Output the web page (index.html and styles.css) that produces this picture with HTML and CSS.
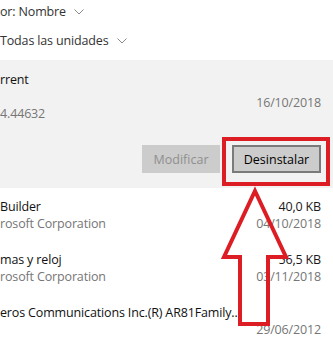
FILE: index.html
```html
<!DOCTYPE html>
<html lang="es">
<head>
    <meta charset="UTF-8">
    <title>Aplicaciones y características</title>
    <link rel="stylesheet" href="styles.css">
</head>
<body>
    <div class="page">
        <div class="filters">
            <div class="filter">or: Nombre
                <svg class="chev" width="10" height="6" viewBox="0 0 10 6"><polyline points="0.5,0.5 5,5 9.5,0.5" /></svg>
            </div>
            <div class="filter">Todas las unidades
                <svg class="chev" width="10" height="6" viewBox="0 0 10 6"><polyline points="0.5,0.5 5,5 9.5,0.5" /></svg>
            </div>
        </div>

        <div class="app selected">
            <div class="app-top">
                <div class="app-left">
                    <div class="name">rrent</div>
                    <div class="version">4.44632</div>
                </div>
                <div class="app-right">
                    <div class="date">16/10/2018</div>
                </div>
            </div>
            <div class="actions">
                <button class="btn disabled">Modificar</button>
                <button class="btn">Desinstalar</button>
            </div>
        </div>

        <div class="app">
            <div class="app-left">
                <div class="name">Builder</div>
                <div class="sub">rosoft Corporation</div>
            </div>
            <div class="app-right">
                <div class="size">40,0 KB</div>
                <div class="date">04/10/2018</div>
            </div>
        </div>

        <div class="app">
            <div class="app-left">
                <div class="name">mas y reloj</div>
                <div class="sub">rosoft Corporation</div>
            </div>
            <div class="app-right">
                <div class="size">56,5 KB</div>
                <div class="date">03/11/2018</div>
            </div>
        </div>

        <div class="app last">
            <div class="app-left">
                <div class="name">eros Communications Inc.(R) AR81Family...</div>
                <div class="sub">&nbsp;</div>
            </div>
            <div class="app-right">
                <div class="size">&nbsp;</div>
                <div class="date">29/06/2012</div>
            </div>
        </div>

        <!-- red highlight drawn over the screenshot -->
        <div class="highlight"></div>
        <svg class="arrow" width="333" height="360" viewBox="0 0 333 360">
            <polygon points="255,191 286,257 268,257 268,324 240,324 240,257 224,257" />
        </svg>
    </div>
</body>
</html>
```

FILE: styles.css
```css
body {
    margin: 0;
    background: #fff;
    font-family: "Segoe UI", "Open Sans", "Noto Sans", sans-serif;
    font-size: 12.5px;
    letter-spacing: -0.15px;
    color: #1a1a1a;
}

.page {
    position: relative;
    width: 333px;
    height: 360px;
    overflow: hidden;
}

.filters {
    padding-top: 2px;
}

.filter {
    display: flex;
    align-items: center;
    gap: 8px;
    height: 18px;
    margin-bottom: 11px;
    color: #333;
    font-size: 12.5px;
}

.chev {
    margin-top: 2px;
}

.chev polyline {
    fill: none;
    stroke: #8a8a8a;
    stroke-width: 1;
}

.app {
    display: flex;
    justify-content: space-between;
    padding: 0 12px 0 0;
    height: 53px;
    line-height: 17px;
    white-space: nowrap;
}

.app-right {
    text-align: right;
}

.name {
    color: #111;
}

.sub,
.version,
.date {
    color: #767676;
}

.selected {
    display: block;
    height: 128px;
    margin-top: 1px;
    padding-top: 11px;
    box-sizing: border-box;
    background: #f2f2f2;
    margin-bottom: 10px;
}

.app-top {
    display: flex;
    justify-content: space-between;
}

.selected .version {
    margin-top: 17px;
}

.selected .date {
    margin-top: 23px;
}

.actions {
    display: flex;
    justify-content: flex-end;
    gap: 12px;
    margin-top: 23px;
}

.btn {
    width: 89px;
    height: 28px;
    font: inherit;
    font-size: 12.5px;
    color: #000;
    background: #cccccc;
    border: 2px solid #7a7a7a;
    padding: 0;
}

.btn.disabled {
    width: 78px;
    color: #8f8f8f;
    border-color: #cccccc;
}

.highlight {
    position: absolute;
    left: 222px;
    top: 137px;
    width: 100px;
    height: 41px;
    border: 4px solid #dc1d24;
}

.arrow {
    position: absolute;
    left: 0;
    top: 0;
}

.arrow polygon {
    fill: none;
    stroke: #dc1d24;
    stroke-width: 4;
    stroke-linejoin: miter;
}
```
